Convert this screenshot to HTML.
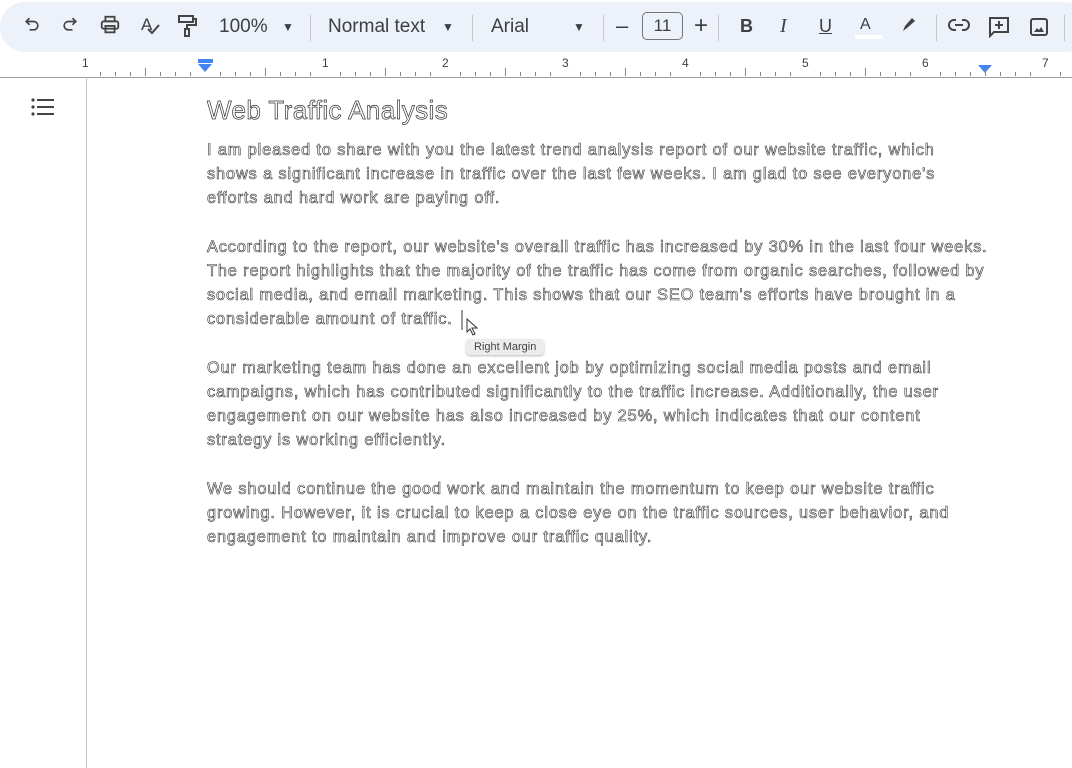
<!DOCTYPE html><html><head><style>
body{margin:0;width:1072px;height:768px;background:#fff;font-family:"Liberation Sans",Arial,sans-serif;position:relative;overflow:hidden}
.tb{position:absolute;left:0;top:2px;width:1090px;height:50px;background:#edf2fa;border-radius:25px}
.i{position:absolute;top:14px;color:#444746}
.t{position:absolute;top:16px;font-size:18px;color:#3c4043}
.sep{position:absolute;top:15px;width:1px;height:26px;background:#c7c7c7}
.rul{position:absolute;left:0;top:52px;width:1072px;height:25px;border-bottom:1px solid #9aa0a6}
.n{position:absolute;top:4px;font-size:12px;color:#3c4043}
.doc{position:absolute;left:207px;top:138px;width:860px;font-size:16.3px;line-height:24.2px;letter-spacing:0.9px;color:#fff;-webkit-text-stroke:0.6px #333;white-space:nowrap}
.doc p{margin:0 0 24.2px}
h1{position:absolute;left:207px;top:95px;margin:0;font-size:26px;letter-spacing:0.4px;font-weight:normal;color:#fff;-webkit-text-stroke:0.7px #333;white-space:nowrap}
</style></head><body>
<div class="tb"></div>
<svg class="i" style="left:22px" width="20" height="20" viewBox="0 0 24 24" fill="none" stroke="#444" stroke-width="2"><path d="M9 5L5 9l4 4M5 9h9a5 5 0 010 10H9"/></svg>
<svg class="i" style="left:60px" width="20" height="20" viewBox="0 0 24 24" fill="none" stroke="#444" stroke-width="2"><path d="M15 5l4 4-4 4M19 9h-9a5 5 0 000 10h5"/></svg>
<svg class="i" style="left:99px" width="22" height="22" viewBox="0 0 24 24" fill="none" stroke="#444" stroke-width="2"><rect x="7" y="3" width="10" height="5"/><rect x="3" y="8" width="18" height="8" rx="2"/><rect x="7" y="13" width="10" height="7"/></svg>
<div class="t" style="left:141px;top:15px;font-size:17px">A</div>
<svg class="i" style="left:146px;top:24px" width="14" height="12" viewBox="0 0 14 12" fill="none" stroke="#444" stroke-width="2"><path d="M2 5l4 4 7-8"/></svg>
<svg class="i" style="left:177px" width="22" height="24" viewBox="0 0 22 24" fill="none" stroke="#444" stroke-width="2"><rect x="2" y="2" width="14" height="6"/><path d="M16 5h3v6h-9v4"/><rect x="8" y="15" width="4" height="7"/></svg>
<div class="t" style="left:219px;font-size:19px">100%</div>
<div class="t" style="left:282px;font-size:12px;top:20px">▼</div>
<div class="sep" style="left:310px"></div>
<div class="t" style="left:328px;font-size:19px">Normal text</div>
<div class="t" style="left:442px;font-size:12px;top:20px">▼</div>
<div class="sep" style="left:472px"></div>
<div class="t" style="left:491px;font-size:19px">Arial</div>
<div class="t" style="left:573px;font-size:12px;top:20px">▼</div>
<div class="sep" style="left:603px"></div>
<div class="t" style="left:616px;top:13px;font-size:22px">–</div>
<div style="position:absolute;left:642px;top:12px;width:41px;height:28px;border:1px solid #747775;border-radius:5px;box-sizing:border-box;font-size:17px;text-align:center;line-height:26px;color:#3c4043">11</div>
<div class="t" style="left:694px;top:12px;font-size:24px">+</div>
<div class="sep" style="left:718px"></div>
<div class="t" style="left:740px;font-weight:bold">B</div>
<div class="t" style="left:780px;font-style:italic;font-family:'Liberation Serif',serif;font-size:20px;top:15px">I</div>
<div class="t" style="left:819px;text-decoration:underline">U</div>
<div class="t" style="left:860px;font-size:16px">A</div>
<div style="position:absolute;left:855px;top:35px;width:27px;height:4px;background:#fff"></div>
<svg class="i" style="left:900px;top:16px" width="18" height="18" viewBox="0 0 18 18"><path d="M3 15l2-5 7-8 3 3-8 7z" fill="#444"/></svg>
<div class="sep" style="left:936px"></div>
<svg class="i" style="left:948px;top:18px" width="22" height="14" viewBox="0 0 22 14" fill="none" stroke="#444" stroke-width="2"><path d="M8 2H6a5 5 0 000 10h2M14 2h2a5 5 0 010 10h-2M7 7h8"/></svg>
<svg class="i" style="left:988px;top:16px" width="22" height="22" viewBox="0 0 22 22" fill="none" stroke="#444" stroke-width="2"><path d="M2 2h18v14H6l-4 4z"/><path d="M11 5v8M7 9h8"/></svg>
<svg class="i" style="left:1029px;top:17px" width="20" height="20" viewBox="0 0 20 20" fill="none" stroke="#444" stroke-width="2"><rect x="2" y="2" width="16" height="16" rx="2"/><path d="M5 15l3-4 2 2 2-3 3 5z" fill="#444" stroke="none"/></svg>
<div class="sep" style="left:1064px"></div>
<div class="rul">
<div class="n" style="left:82px">1</div><div class="n" style="left:322px">1</div><div class="n" style="left:442px">2</div><div class="n" style="left:562px">3</div><div class="n" style="left:682px">4</div><div class="n" style="left:802px">5</div><div class="n" style="left:922px">6</div><div class="n" style="left:1042px">7</div>
<div style="position:absolute;left:198px;top:7px;width:15px;height:4px;background:#4285f4"></div>
<div style="position:absolute;left:198px;top:12px;border-left:7.5px solid transparent;border-right:7.5px solid transparent;border-top:8px solid #4285f4"></div>
<div style="position:absolute;left:978px;top:13px;border-left:7.5px solid transparent;border-right:7.5px solid transparent;border-top:8px solid #4285f4"></div>
</div>
<div id="ticks"></div>
<div style="position:absolute;left:86px;top:77px;width:1px;height:691px;background:#c4c7c5"></div>
<svg style="position:absolute;left:31px;top:98px" width="24" height="18" viewBox="0 0 24 18"><g fill="#444"><circle cx="2" cy="2" r="1.6"/><circle cx="2" cy="9" r="1.6"/><circle cx="2" cy="16" r="1.6"/><rect x="6" y="1" width="17" height="2"/><rect x="6" y="8" width="17" height="2"/><rect x="6" y="15" width="17" height="2"/></g></svg>
<h1>Web Traffic Analysis</h1>
<div class="doc">
<p>I am pleased to share with you the latest trend analysis report of our website traffic, which<br>shows a significant increase in traffic over the last few weeks. I am glad to see everyone's<br>efforts and hard work are paying off.</p>
<p>According to the report, our website's overall traffic has increased by 30% in the last four weeks.<br>The report highlights that the majority of the traffic has come from organic searches, followed by<br>social media, and email marketing. This shows that our SEO team's efforts have brought in a<br>considerable amount of traffic.</p>
<p>Our marketing team has done an excellent job by optimizing social media posts and email<br>campaigns, which has contributed significantly to the traffic increase. Additionally, the user<br>engagement on our website has also increased by 25%, which indicates that our content<br>strategy is working efficiently.</p>
<p>We should continue the good work and maintain the momentum to keep our website traffic<br>growing. However, it is crucial to keep a close eye on the traffic sources, user behavior, and<br>engagement to maintain and improve our traffic quality.</p>
</div>
<div style="position:absolute;left:461px;top:310px;width:2px;height:20px;background:#999"></div>
<div style="position:absolute;left:466px;top:339px;padding:2px 8px;background:#ececec;border-radius:4px;font-size:11px;color:#444;box-shadow:0 1px 2px #bbb">Right Margin</div>
<svg style="position:absolute;left:466px;top:318px" width="14" height="18" viewBox="0 0 14 18"><path d="M1 1v13l3-3 3 6 2-1-3-6h5z" fill="#fff" stroke="#333"/></svg>
<script>
var s='';for(var x=85;x<1072;x+=15){var k=Math.round((x-85)/15)%8;if(k==0)continue;var h=k==4?8:4;s+='<div style="position:absolute;left:'+x+'px;top:'+(76-h)+'px;width:1px;height:'+h+'px;background:#80868b"></div>';}document.getElementById('ticks').innerHTML=s;
</script>
</body></html>
